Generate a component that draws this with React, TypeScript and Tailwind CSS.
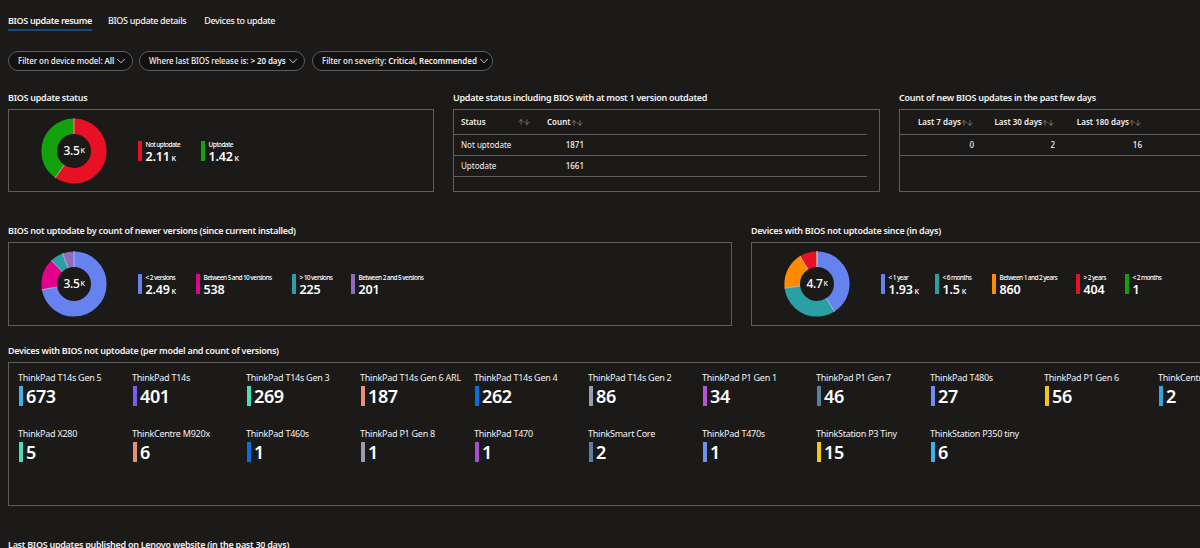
import { ArrowDown, ArrowUp, ChevronDown } from 'lucide-react';

interface Segment {
  value: number;
  color: string;
}

interface LegendItem {
  label: string;
  value: string;
  unit?: string;
  color: string;
  width: string;
}

const statusSegments: Segment[] = [
  { value: 59.7, color: '#e81123' },
  { value: 40.3, color: '#13a10e' },
];

const versionSegments: Segment[] = [
  { value: 72.2, color: '#6582ee' },
  { value: 15.6, color: '#e3008c' },
  { value: 6.5, color: '#2aa0a4' },
  { value: 5.7, color: '#8e6bbf' },
];

const daysSegments: Segment[] = [
  { value: 41, color: '#6582ee' },
  { value: 32, color: '#2aa0a4' },
  { value: 18.3, color: '#ff8c00' },
  { value: 8.6, color: '#e81123' },
  { value: 0.1, color: '#13a10e' },
];

const statusLegend: LegendItem[] = [
  { label: 'Not uptodate', value: '2.11', unit: 'K', color: 'bg-[#e81123]', width: 'w-[63px]' },
  { label: 'Uptodate', value: '1.42', unit: 'K', color: 'bg-[#13a10e]', width: 'w-[60px]' },
];

const versionLegend: LegendItem[] = [
  { label: '< 2 versions', value: '2.49', unit: 'K', color: 'bg-[#6582ee]', width: 'w-[58px]' },
  { label: 'Between 5 and 10 versions', value: '538', color: 'bg-[#e3008c]', width: 'w-[96px]' },
  { label: '> 10 versions', value: '225', color: 'bg-[#2aa0a4]', width: 'w-[59px]' },
  { label: 'Between 2 and 5 versions', value: '201', color: 'bg-[#8e6bbf]', width: 'w-[90px]' },
];

const daysLegend: LegendItem[] = [
  { label: '< 1 year', value: '1.93', unit: 'K', color: 'bg-[#6582ee]', width: 'w-[54px]' },
  { label: '< 6 months', value: '1.5', unit: 'K', color: 'bg-[#2aa0a4]', width: 'w-[57px]' },
  { label: 'Between 1 and 2 years', value: '860', color: 'bg-[#ff8c00]', width: 'w-[84px]' },
  { label: '> 2 years', value: '404', color: 'bg-[#e81123]', width: 'w-[49px]' },
  { label: '< 2 months', value: '1', color: 'bg-[#13a10e]', width: 'w-[50px]' },
];

const models = [
  { name: 'ThinkPad T14s Gen 5', value: '673', color: 'bg-[#3cb0e8]' },
  { name: 'ThinkPad T14s', value: '401', color: 'bg-[#7b5cf0]' },
  { name: 'ThinkPad T14s Gen 3', value: '269', color: 'bg-[#45e0b8]' },
  { name: 'ThinkPad T14s Gen 6 ARL', value: '187', color: 'bg-[#e8906f]' },
  { name: 'ThinkPad T14s Gen 4', value: '262', color: 'bg-[#0f6ce0]' },
  { name: 'ThinkPad T14s Gen 2', value: '86', color: 'bg-[#9a9ab0]' },
  { name: 'ThinkPad P1 Gen 1', value: '34', color: 'bg-[#b455d8]' },
  { name: 'ThinkPad P1 Gen 7', value: '46', color: 'bg-[#5a7f9a]' },
  { name: 'ThinkPad T480s', value: '27', color: 'bg-[#7090f0]' },
  { name: 'ThinkPad P1 Gen 6', value: '56', color: 'bg-[#f2c811]' },
  { name: 'ThinkCentre M70q', value: '2', color: 'bg-[#36a3dc]' },
  { name: 'ThinkPad X280', value: '5', color: 'bg-[#45e0b8]' },
  { name: 'ThinkCentre M920x', value: '6', color: 'bg-[#e8906f]' },
  { name: 'ThinkPad T460s', value: '1', color: 'bg-[#0f6ce0]' },
  { name: 'ThinkPad P1 Gen 8', value: '1', color: 'bg-[#9a9ab0]' },
  { name: 'ThinkPad T470', value: '1', color: 'bg-[#a64fd0]' },
  { name: 'ThinkSmart Core', value: '2', color: 'bg-[#5a7f9a]' },
  { name: 'ThinkPad T470s', value: '1', color: 'bg-[#7090f0]' },
  { name: 'ThinkStation P3 Tiny', value: '15', color: 'bg-[#f2c811]' },
  { name: 'ThinkStation P350 tiny', value: '6', color: 'bg-[#3cb0e8]' },
];

const Donut = ({ segments, total }: { segments: Segment[]; total: string }) => {
  let offset = 0;
  return (
    <div className="relative w-[66px] h-[66px] shrink-0">
      <svg viewBox="0 0 66 66" className="w-full h-full -rotate-90">
        {segments.map((s) => {
          const start = offset;
          offset += s.value;
          return (
            <circle
              key={s.color}
              cx="33"
              cy="33"
              r="24.8"
              fill="none"
              stroke={s.color}
              strokeWidth="15.6"
              pathLength={100}
              strokeDasharray={`${s.value} ${100 - s.value}`}
              strokeDashoffset={-start}
            />
          );
        })}
        {segments.map((s, i) => {
          const start = segments.slice(0, i).reduce((sum, x) => sum + x.value, 0);
          return (
            <line
              key={s.color}
              x1="50"
              y1="33"
              x2="66"
              y2="33"
              stroke="#e8d8d8"
              strokeWidth="0.6"
              transform={`rotate(${start * 3.6} 33 33)`}
            />
          );
        })}
      </svg>
      <div className="absolute inset-0 flex items-center justify-center font-medium text-[12px] tracking-[-0.3px] text-white">
        {total}
        <span className="text-[7px] ml-px mt-px">K</span>
      </div>
    </div>
  );
};

const Legend = ({ items }: { items: LegendItem[] }) => (
  <div className="flex ml-[31px]">
    {items.map((item) => (
      <div key={item.label} className={`${item.width} flex gap-[4px] shrink-0 h-[20px]`}>
        <div className={`w-[3.5px] h-[20px] ${item.color}`} />
        <div className="flex flex-col whitespace-nowrap text-white">
          <span className="text-[6.5px] leading-[8px] font-medium tracking-[-0.6px]">{item.label}</span>
          <span className="text-[12.5px] leading-[14px] font-semibold mt-[1px] tracking-[-0.2px]">
            {item.value}
            {item.unit && <span className="text-[7px] ml-[2px]">{item.unit}</span>}
          </span>
        </div>
      </div>
    ))}
  </div>
);

const Section = ({
  title,
  className,
  boxClassName,
  children,
}: {
  title: string;
  className: string;
  boxClassName: string;
  children: React.ReactNode;
}) => (
  <section className={`shrink-0 ${className}`}>
    <h2 className="text-[9px] leading-[12px] font-semibold tracking-[-0.28px] text-[#f3f2f1] whitespace-nowrap mb-[5px]">{title}</h2>
    <div className={`border border-[#605e5c] ${boxClassName}`}>{children}</div>
  </section>
);

const Sort = () => (
  <span className="inline-flex align-middle text-[#d2d0ce]">
    <ArrowUp size={8} strokeWidth={1.3} className="-ml-[1px] -mr-[2px]" />
    <ArrowDown size={8} strokeWidth={1.3} className="-mr-[1px]" />
  </span>
);

const App = () => {
  return (
    <div className="w-[1200px] h-[548px] overflow-hidden bg-[#1b1a19] text-[#f3f2f1] pl-2 font-['Noto_Sans','Open_Sans',sans-serif]">
      {/* Tabs */}
      <div className="flex h-[31px] pt-[15px] text-[9px] leading-[12px] tracking-[-0.35px]">
        <div className="w-[84px] h-[16px] border-b-2 border-[#0f4c81] font-semibold whitespace-nowrap">BIOS update resume</div>
        <div className="ml-[16px] font-medium">BIOS update details</div>
        <div className="ml-[18px] font-medium">Devices to update</div>
      </div>

      {/* Filters */}
      <div className="flex mt-[20px] text-[8px] font-medium tracking-[-0.08px]">
        <button className="h-[20px] w-[125px] flex items-center justify-between pl-[9px] pr-[4px] rounded-full border border-[#605e5c] bg-[#111111] whitespace-nowrap">
          <span>Filter on device model: <b className="font-semibold">All</b></span>
          <ChevronDown size={14} strokeWidth={1.4} className="shrink-0" />
        </button>
        <button className="h-[20px] w-[166px] ml-[6px] flex items-center justify-between pl-[9px] pr-[4px] rounded-full border border-[#605e5c] bg-[#111111] whitespace-nowrap">
          <span>Where last BIOS release is: <b className="font-semibold">&gt; 20 days</b></span>
          <ChevronDown size={14} strokeWidth={1.4} className="shrink-0" />
        </button>
        <button className="h-[20px] w-[181px] ml-[7px] flex items-center justify-between pl-[9px] pr-[4px] rounded-full border border-[#605e5c] bg-[#111111] whitespace-nowrap">
          <span>Filter on severity: <b className="font-semibold">Critical, Recommended</b></span>
          <ChevronDown size={14} strokeWidth={1.4} className="shrink-0" />
        </button>
      </div>

      {/* Row 1 */}
      <div className="flex gap-[19px] mt-[21px]">
        <Section title="BIOS update status" className="w-[426px]" boxClassName="h-[83px] flex items-center pl-[32px]">
          <Donut segments={statusSegments} total="3.5" />
          <Legend items={statusLegend} />
        </Section>
        <Section title="Update status including BIOS with at most 1 version outdated" className="w-[427px]" boxClassName="h-[83px]">
          <table className="w-[413px] border-collapse text-[8px] text-left">
            <thead>
              <tr className="h-[24px] border-b border-[#605e5c]">
                <th className="w-[76px] pl-[7px] font-semibold">
                  <div className="flex items-center justify-between"><span>Status</span><Sort /></div>
                </th>
                <th className="w-[54px] pl-[17px] font-semibold whitespace-nowrap">Count<Sort /></th>
                <th />
              </tr>
            </thead>
            <tbody>
              <tr className="h-[21px] border-b border-[#605e5c]">
                <td className="pl-[7px]">Not uptodate</td>
                <td className="text-right font-medium">1871</td>
                <td />
              </tr>
              <tr className="h-[21px] border-b border-[#605e5c]">
                <td className="pl-[7px]">Uptodate</td>
                <td className="text-right font-medium">1661</td>
                <td />
              </tr>
            </tbody>
          </table>
        </Section>
        <Section title="Count of new BIOS updates in the past few days" className="w-[330px]" boxClassName="h-[83px]">
          <table className="w-full border-collapse text-[8px]">
            <thead>
              <tr className="h-[24px] border-b border-[#605e5c]">
                <th className="w-[74px] pr-[1px] text-right font-semibold whitespace-nowrap">Last 7 days<Sort /></th>
                <th className="w-[81px] pr-[1px] text-right font-semibold whitespace-nowrap">Last 30 days<Sort /></th>
                <th className="w-[87px] pr-[1px] text-right font-semibold whitespace-nowrap">Last 180 days<Sort /></th>
                <th />
              </tr>
            </thead>
            <tbody>
              <tr className="h-[21px] border-b border-[#605e5c] text-right font-medium">
                <td>0</td>
                <td>2</td>
                <td>16</td>
                <td />
              </tr>
            </tbody>
          </table>
        </Section>
      </div>

      {/* Row 2 */}
      <div className="flex gap-[19px] mt-[33px]">
        <Section title="BIOS not uptodate by count of newer versions (since current installed)" className="w-[724px]" boxClassName="h-[84px] flex items-center pl-[32px]">
          <Donut segments={versionSegments} total="3.5" />
          <Legend items={versionLegend} />
        </Section>
        <Section title="Devices with BIOS not uptodate since (in days)" className="w-[480px]" boxClassName="h-[84px] flex items-center pl-[32px]">
          <Donut segments={daysSegments} total="4.7" />
          <Legend items={daysLegend} />
        </Section>
      </div>

      {/* Row 3 */}
      <div className="mt-[19px]">
        <Section title="Devices with BIOS not uptodate (per model and count of versions)" className="w-[1240px]" boxClassName="h-[144px] pl-[9px] pt-[9px]">
          <div className="grid grid-cols-[repeat(11,114px)] auto-rows-[55.5px]">
            {models.map((m) => (
              <div key={m.name} className="whitespace-nowrap overflow-hidden">
                <div className="text-[9px] leading-[12px] tracking-[-0.25px] text-[#f3f2f1]">{m.name}</div>
                <div className="flex items-center gap-[3px] mt-[2px] pl-px">
                  <div className={`w-[4px] h-[20px] ${m.color}`} />
                  <span className="text-[18px] leading-[20px] font-semibold tracking-[-0.4px] text-white">{m.value}</span>
                </div>
              </div>
            ))}
          </div>
        </Section>
      </div>

      <h2 className="mt-[33px] text-[9px] leading-[12px] font-semibold tracking-[-0.28px] text-[#f3f2f1] whitespace-nowrap">
        Last BIOS updates published on Lenovo website (in the past 30 days)
      </h2>
    </div>
  );
};

export default App;
